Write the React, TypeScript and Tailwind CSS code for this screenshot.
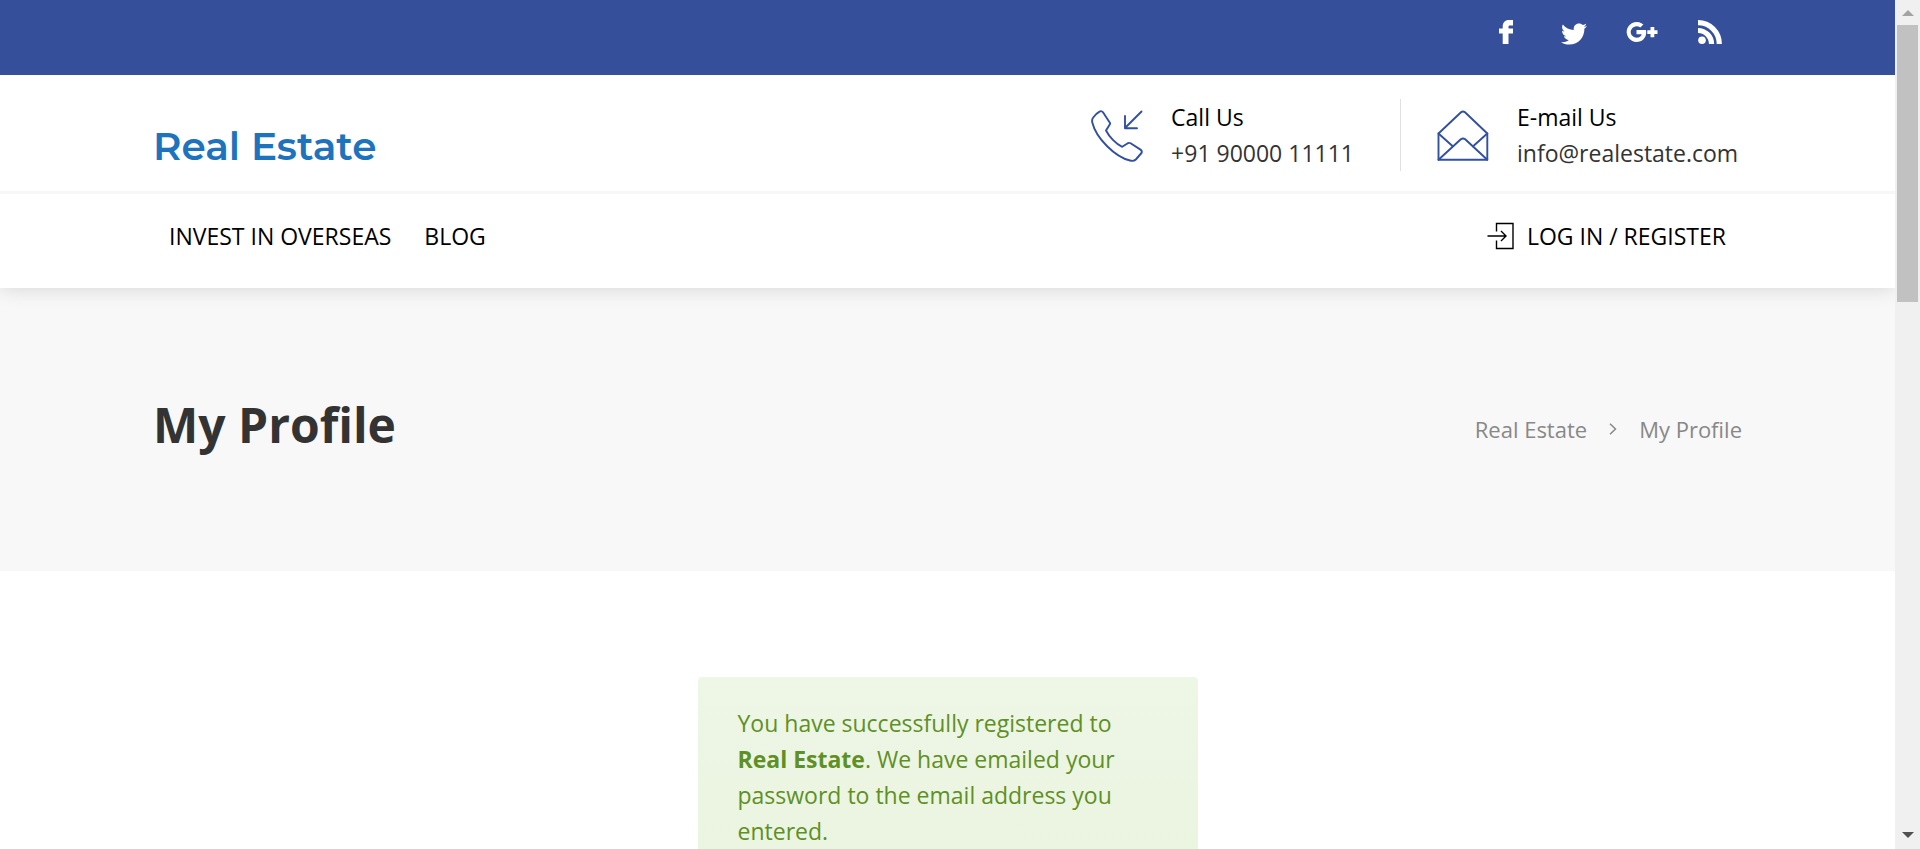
import React from "react";
import { FaTwitter } from "react-icons/fa";

function FacebookIcon() {
  return (
    <svg viewBox="0 0 24 24" className="h-6 w-6" fill="currentColor" aria-hidden="true">
      <path d="M19 0v5.500h-3.200c-1 0-1.300.6-1.300 1.400V8.500H19v5h-4.500V24H8.700V13.500H5v-5h3.700V6.400C8.700 2.500 11.200 0 14.800 0z" />
    </svg>
  );
}

function GooglePlusIcon() {
  return (
    <svg viewBox="0 0 32 24" className="h-6 w-8 shrink-0" fill="currentColor" aria-hidden="true">
      <path d="M10.500 10v4.200h5.200c-.5 2-2.300 3.600-5.200 3.600a5.800 5.800 0 1 1 3.800-10.200l3.100-3A10 10 0 1 0 10.500 22c5.700 0 9.700-4 9.700-9.700 0-.8-.1-1.600-.3-2.300z" />
      <path d="M24.500 7h3.800v3.300h3.200v3.700h-3.200v3.200h-3.800V14h-3.200v-3.700h3.200z" />
    </svg>
  );
}

function RssIcon() {
  return (
    <svg viewBox="0 0 24 24" className="h-6 w-6" aria-hidden="true">
      <circle cx="4" cy="20.200" r="3.800" fill="currentColor" />
      <path d="M0 10.500A13.500 13.500 0 0 1 13.500 24M0 2.700A21.300 21.300 0 0 1 21.300 24" fill="none" stroke="currentColor" strokeWidth="5.200" />
    </svg>
  );
}

function PhoneIcon() {
  return (
    <svg viewBox="0 0 52 52" className="mt-0.5 h-[52px] w-[52px] shrink-0 text-[#3150a0]" fill="none" stroke="currentColor" strokeWidth="1.900" strokeLinejoin="round" strokeLinecap="round" aria-hidden="true">
      <path d="M8.500 1.600Q10.500.4 12 2.300L19 13Q19.300 13.600 18.900 14.200L15 20.500C18 26.500 25 34 31.200 36.800L36.800 33.200Q38.200 32.500 39.600 33.300L49.500 39.600Q51.500 41 50.500 43L44.800 49.500Q42.800 51.500 39 50.500C24 47 5 28 1.300 12.500Q.6 9.500 2.200 7.500Q5 3.600 8.500 1.600z" />
      <path d="M50.500 1.500L34 18M34 6v12.200h12" />
    </svg>
  );
}

function EnvelopeIcon() {
  return (
    <svg viewBox="0 0 52 52" className="mt-0.5 h-[52px] w-[52px] shrink-0 text-[#3150a0]" fill="none" stroke="currentColor" strokeWidth="1.900" strokeLinejoin="round" strokeLinecap="round" aria-hidden="true">
      <path d="M1.500 23.500v26.300h48.800V23.500L28 2.200Q26 .6 24 2.200z" />
      <path d="M1.500 23.500l14.500 13M50.300 23.500l-14.500 13M1.500 49.800L23.800 29.300Q26 27.700 28.200 29.300L50.300 49.800" />
    </svg>
  );
}

function LoginIcon() {
  return (
    <svg viewBox="0 0 28 28" className="h-7 w-7" fill="none" stroke="currentColor" strokeWidth="1.400" aria-hidden="true">
      <path d="M9.500 9.500V1.500h16.500v25H9.500v-8M.5 14h18.500M14 9l5 5-5 5" />
    </svg>
  );
}

const socials = [
  { label: "Facebook", icon: <FacebookIcon /> },
  { label: "Twitter", icon: <FaTwitter className="mt-1 h-[26px] w-[26px] shrink-0" /> },
  { label: "Google Plus", icon: <GooglePlusIcon /> },
  { label: "RSS", icon: <RssIcon /> },
];

function Contact({ icon, title, value, href }: { icon: React.ReactNode; title: string; value: string; href: string }) {
  return (
    <div className="flex items-center gap-[28px]">
      {icon}
      <div>
        <p className="font-medium text-black">{title}</p>
        <a href={href} className="block">{value}</a>
      </div>
    </div>
  );
}

function ScrollBar() {
  return (
    <div className="flex w-[25px] shrink-0 flex-col items-center bg-[#f0f0f0]" aria-hidden="true">
      <div className="flex h-[25px] items-center">
        <svg viewBox="0 0 12 6" className="h-[6px] w-3" fill="#a3a3a3"><path d="M0 6L6 0l6 6z" /></svg>
      </div>
      <div className="h-[277px] w-[21px] bg-[#c1c1c1]" />
      <div className="mt-auto flex h-[28px] items-center">
        <svg viewBox="0 0 12 6" className="h-[6px] w-3" fill="#505050"><path d="M0 0l6 6 6-6z" /></svg>
      </div>
    </div>
  );
}

export default function App() {
  return (
    <div className="flex h-screen overflow-hidden bg-white font-['Open_Sans',sans-serif] text-[23px] leading-9 text-[#333]">
      <div className="min-w-0 flex-1 overflow-hidden">
        <header className="relative shadow-[0_0_20px_rgba(0,0,0,0.15)]">
          <div className="flex h-[75px] justify-end bg-[#354f9a] px-[153px] pt-5 text-white">
            <ul className="flex gap-11 pr-5">
              {socials.map((s) => (
                <li key={s.label}>
                  <a href="#" aria-label={s.label} className="flex h-6 w-6 items-center justify-center">{s.icon}</a>
                </li>
              ))}
            </ul>
          </div>
          <div className="flex justify-between border-b-[3px] border-[#f7f7f7] bg-white px-[153px] pt-6 pb-5">
            <a href="#" className="self-end pb-1 font-['Montserrat','Inter',sans-serif] text-[39px] leading-[42px] font-semibold text-[#1e73be]">Real Estate</a>
            <div className="flex">
              <div className="border-r border-[#e0e0e0] pr-[46px]">
                <Contact icon={<PhoneIcon />} title="Call Us" value="+91 90000 11111" href="tel:+919000011111" />
              </div>
              <div className="min-w-[341px] pl-9">
                <Contact icon={<EnvelopeIcon />} title="E-mail Us" value="info@realestate.com" href="mailto:info@realestate.com" />
              </div>
            </div>
          </div>
          <nav className="flex h-[94px] justify-between bg-white px-[169px] pt-6 font-medium text-black">
            <div className="flex gap-[33px]">
              <a href="#">INVEST IN OVERSEAS</a>
              <a href="#">BLOG</a>
            </div>
            <a href="#" className="flex h-9 items-center gap-3"><LoginIcon />LOG IN / REGISTER</a>
          </nav>
        </header>
        <section className="flex h-[283px] items-center justify-between bg-[#f8f8f8] px-[153px] pb-0.5">
          <h1 className="pb-2 text-5xl leading-[60px] font-bold">My Profile</h1>
          <div className="flex items-center text-[22px] text-[#888]">
            <a href="#">Real Estate</a>
            <svg viewBox="0 0 8 12" className="mx-[22px] h-3 w-2" fill="none" stroke="currentColor" strokeWidth="1.500" aria-hidden="true"><path d="M1 .7L6.500 6 1 11.300" /></svg>
            <span>My Profile</span>
          </div>
        </section>
        <main className="flex justify-center pt-[106px]">
          <p className="h-[260px] w-[500px] rounded bg-linear-to-b from-[#eef6e6] to-[#e9f4dd] px-10 pt-7 font-medium text-[#5f9025]">
            You have successfully registered to <strong className="font-bold">Real Estate</strong>. We have emailed your password to the email address you entered.
          </p>
        </main>
      </div>
      <ScrollBar />
    </div>
  );
}
